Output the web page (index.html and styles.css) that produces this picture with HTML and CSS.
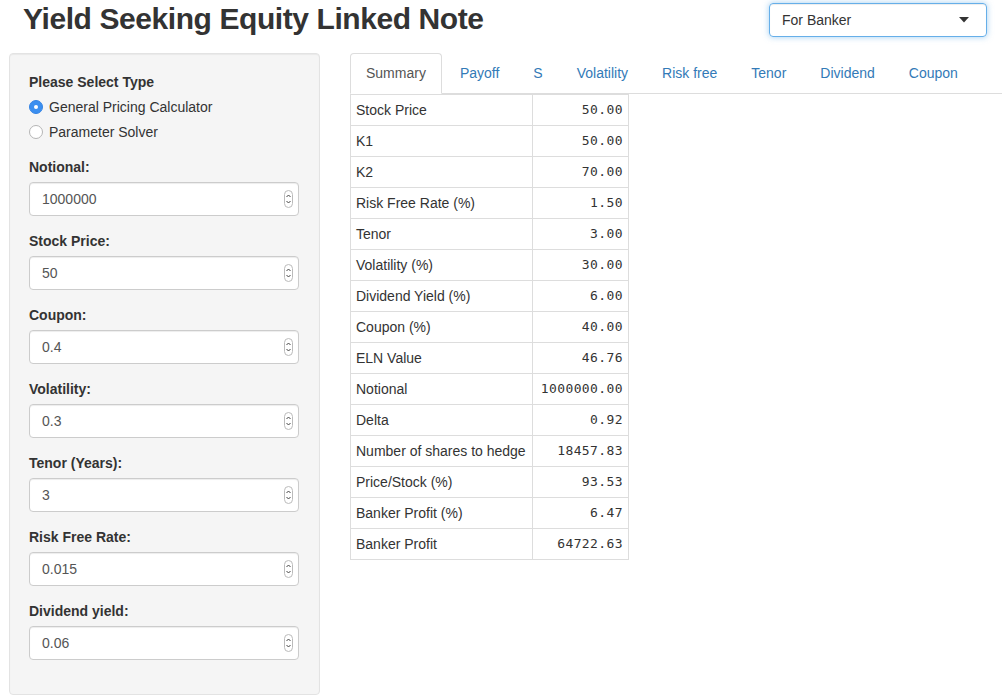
FILE: index.html
```html
<!DOCTYPE html>
<html>
<head>
<meta charset="utf-8">
<link rel="stylesheet" href="styles.css">
</head>
<body>
<div class="header">
  <h2 class="title">Yield Seeking Equity Linked Note</h2>
  <div class="select">
    <span>For Banker</span>
    <svg class="caret" width="10" height="6" viewBox="0 0 10 6"><path d="M0 0 L10 0 L5 5.5 Z" fill="#333"/></svg>
  </div>
</div>
<div class="row">
  <div class="well">
    <div class="group radio-group">
      <div class="label">Please Select Type</div>
      <div class="radio"><span class="dot on"></span><span>General Pricing Calculator</span></div>
      <div class="radio"><span class="dot"></span><span>Parameter Solver</span></div>
    </div>
    <div class="group"><div class="label">Notional:</div><div class="input"><span>1000000</span><svg class="spin" width="9" height="18" viewBox="0 0 9 18"><rect x="0.5" y="0.5" width="8" height="17" rx="4" fill="#fff" stroke="#bbb"/><path d="M2.5 7 L4.5 5 L6.5 7 M2.5 11 L4.5 13 L6.5 11" fill="none" stroke="#444" stroke-width="1"/></svg></div></div>
    <div class="group"><div class="label">Stock Price:</div><div class="input"><span>50</span><svg class="spin" width="9" height="18" viewBox="0 0 9 18"><rect x="0.5" y="0.5" width="8" height="17" rx="4" fill="#fff" stroke="#bbb"/><path d="M2.5 7 L4.5 5 L6.5 7 M2.5 11 L4.5 13 L6.5 11" fill="none" stroke="#444" stroke-width="1"/></svg></div></div>
    <div class="group"><div class="label">Coupon:</div><div class="input"><span>0.4</span><svg class="spin" width="9" height="18" viewBox="0 0 9 18"><rect x="0.5" y="0.5" width="8" height="17" rx="4" fill="#fff" stroke="#bbb"/><path d="M2.5 7 L4.5 5 L6.5 7 M2.5 11 L4.5 13 L6.5 11" fill="none" stroke="#444" stroke-width="1"/></svg></div></div>
    <div class="group"><div class="label">Volatility:</div><div class="input"><span>0.3</span><svg class="spin" width="9" height="18" viewBox="0 0 9 18"><rect x="0.5" y="0.5" width="8" height="17" rx="4" fill="#fff" stroke="#bbb"/><path d="M2.5 7 L4.5 5 L6.5 7 M2.5 11 L4.5 13 L6.5 11" fill="none" stroke="#444" stroke-width="1"/></svg></div></div>
    <div class="group"><div class="label">Tenor (Years):</div><div class="input"><span>3</span><svg class="spin" width="9" height="18" viewBox="0 0 9 18"><rect x="0.5" y="0.5" width="8" height="17" rx="4" fill="#fff" stroke="#bbb"/><path d="M2.5 7 L4.5 5 L6.5 7 M2.5 11 L4.5 13 L6.5 11" fill="none" stroke="#444" stroke-width="1"/></svg></div></div>
    <div class="group"><div class="label">Risk Free Rate:</div><div class="input"><span>0.015</span><svg class="spin" width="9" height="18" viewBox="0 0 9 18"><rect x="0.5" y="0.5" width="8" height="17" rx="4" fill="#fff" stroke="#bbb"/><path d="M2.5 7 L4.5 5 L6.5 7 M2.5 11 L4.5 13 L6.5 11" fill="none" stroke="#444" stroke-width="1"/></svg></div></div>
    <div class="group"><div class="label">Dividend yield:</div><div class="input"><span>0.06</span><svg class="spin" width="9" height="18" viewBox="0 0 9 18"><rect x="0.5" y="0.5" width="8" height="17" rx="4" fill="#fff" stroke="#bbb"/><path d="M2.5 7 L4.5 5 L6.5 7 M2.5 11 L4.5 13 L6.5 11" fill="none" stroke="#444" stroke-width="1"/></svg></div></div>
  </div>
  <div class="main">
    <ul class="tabs">
      <li class="active">Summary</li>
      <li>Payoff</li>
      <li>S</li>
      <li>Volatility</li>
      <li>Risk free</li>
      <li>Tenor</li>
      <li>Dividend</li>
      <li>Coupon</li>
    </ul>
    <table class="summary">
      <tr><td class="k">Stock Price</td><td class="v">50.00</td></tr>
      <tr><td class="k">K1</td><td class="v">50.00</td></tr>
      <tr><td class="k">K2</td><td class="v">70.00</td></tr>
      <tr><td class="k">Risk Free Rate (%)</td><td class="v">1.50</td></tr>
      <tr><td class="k">Tenor</td><td class="v">3.00</td></tr>
      <tr><td class="k">Volatility (%)</td><td class="v">30.00</td></tr>
      <tr><td class="k">Dividend Yield (%)</td><td class="v">6.00</td></tr>
      <tr><td class="k">Coupon (%)</td><td class="v">40.00</td></tr>
      <tr><td class="k">ELN Value</td><td class="v">46.76</td></tr>
      <tr><td class="k">Notional</td><td class="v">1000000.00</td></tr>
      <tr><td class="k">Delta</td><td class="v">0.92</td></tr>
      <tr><td class="k">Number of shares to hedge</td><td class="v">18457.83</td></tr>
      <tr><td class="k">Price/Stock (%)</td><td class="v">93.53</td></tr>
      <tr><td class="k">Banker Profit (%)</td><td class="v">6.47</td></tr>
      <tr><td class="k">Banker Profit</td><td class="v">64722.63</td></tr>
    </table>
  </div>
</div>
</body>
</html>
```

FILE: styles.css
```css
* { box-sizing: border-box; }
body {
  margin: 0;
  font-family: "Liberation Sans", Arial, sans-serif;
  font-size: 14px;
  line-height: 20px;
  color: #333;
  background: #fff;
}
.header {
  display: flex;
  justify-content: space-between;
  align-items: flex-start;
  height: 53px;
  padding: 2px 18px 0 23px;
}
.title {
  margin: 0;
  font-size: 30px;
  line-height: 33px;
  font-weight: 700;
  letter-spacing: -0.42px;
  color: #333;
}
.select {
  margin-top: 1px;
  width: 218px;
  height: 34px;
  border: 1px solid #66afe9;
  border-radius: 4px;
  box-shadow: inset 0 1px 1px rgba(0,0,0,.075), 0 0 6px rgba(102,175,233,.6);
  display: flex;
  align-items: center;
  justify-content: space-between;
  padding: 0 17px 0 12px;
  color: #333;
}
.caret { display: block; }
.row {
  display: flex;
  align-items: flex-start;
}
.well {
  margin-left: 9px;
  width: 311px;
  height: 642px;
  background: #f5f5f5;
  border: 1px solid #e3e3e3;
  border-radius: 4px;
  box-shadow: inset 0 1px 1px rgba(0,0,0,.05);
  padding: 18px 19px 19px;
}
.group { margin-bottom: 15px; }
.label {
  font-weight: 700;
  margin-bottom: 5px;
}
.radio {
  display: flex;
  align-items: center;
  gap: 6px;
  height: 20px;
  margin-bottom: 5px;
}
.radio-group .radio:last-child { margin-bottom: 0; }
.dot {
  width: 14px;
  height: 14px;
  border-radius: 50%;
  border: 1px solid #b5b5b5;
  background: #fff;
  display: inline-block;
  position: relative;
}
.dot.on {
  background: #3b8ff0;
  border-color: #3584e4;
}
.dot.on::after {
  content: "";
  position: absolute;
  left: 4px;
  top: 4px;
  width: 4px;
  height: 4px;
  border-radius: 50%;
  background: #fff;
}
.input {
  height: 34px;
  width: 270px;
  background: #fff;
  border: 1px solid #ccc;
  border-radius: 4px;
  box-shadow: inset 0 1px 1px rgba(0,0,0,.075);
  padding: 6px 5px 6px 12px;
  display: flex;
  align-items: center;
  justify-content: space-between;
  color: #555;
}
.spin { display: block; }
.main {
  margin-left: 30px;
  width: 652px;
}
.tabs {
  list-style: none;
  margin: 0;
  padding: 0;
  display: flex;
  border-bottom: 1px solid #ddd;
  height: 41px;
}
.tabs li {
  padding: 9px 15px 11px;
  margin-right: 2px;
  color: #337ab7;
  border: 1px solid transparent;
  border-radius: 4px 4px 0 0;
  height: 41px;
  line-height: 20px;
}
.tabs li.active {
  color: #555;
  background: #fff;
  border-color: #ddd #ddd transparent #ddd;
}
.summary {
  border-collapse: collapse;
  border: 1px solid #ddd;
}
.summary td {
  border: 1px solid #ddd;
  padding: 5px;
  height: 31px;
  line-height: 20px;
}
.summary td.k { width: 182px; }
.summary td.v {
  width: 96px;
  text-align: right;
  font-family: "DejaVu Sans Mono", monospace;
  font-size: 13px;
  letter-spacing: 0.4px;
}
```
